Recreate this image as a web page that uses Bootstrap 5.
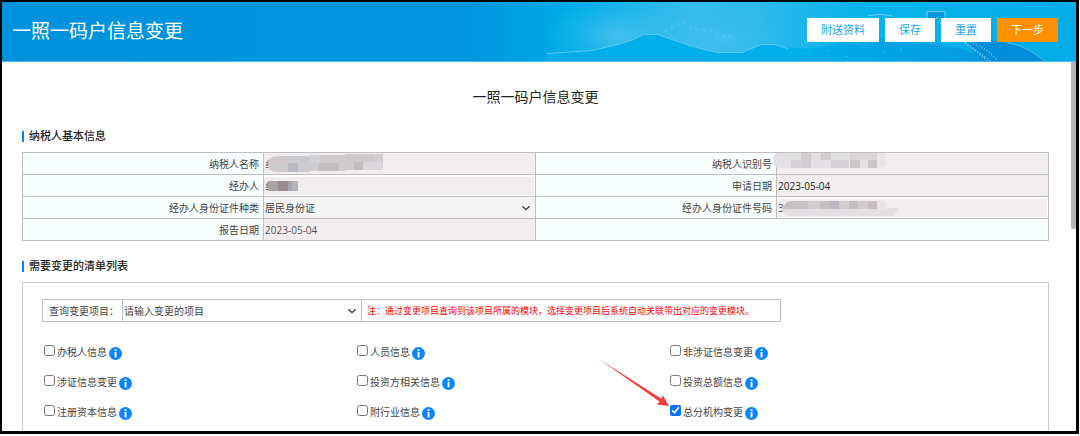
<!DOCTYPE html>
<html lang="zh-CN">
<head>
<meta charset="utf-8">
<meta name="viewport" content="width=device-width, initial-scale=1">
<title>一照一码户信息变更</title>
<link href="https://cdn.jsdelivr.net/npm/bootstrap@5.3.0/dist/css/bootstrap.min.css" rel="stylesheet">
<style>
  body { font-family: "Open Sans", "Noto Sans CJK SC", sans-serif; font-size: 10px; line-height: 14px; color: #444; background: #fff; }
  .window-frame { border: solid #000; border-width: 2px 3px 3px 2px; box-shadow: 0 1px 0 #999; height: calc(100vh - 2px); }
  .frame-gap { padding-right: 1px; }
  .top-bar { min-height: 60px; padding: 0 18px 2px 10px; background: #0093dc; border-bottom: 1px solid #4bb8ea; }
  .top-bar .scenery { inset: 0; width: 100%; height: 100%; }
  .top-bar h1 { font-size: 19px; line-height: 28px; font-weight: 400; color: #fff; }
  .actions { gap: 6px; padding-bottom: 2px; }
  .btn-top { --bs-btn-font-size: 11px; --bs-btn-padding-x: 14px; --bs-btn-padding-y: 0; --bs-btn-border-width: 0; --bs-btn-border-radius: 0;
    --bs-btn-color: #1aa7e8; --bs-btn-bg: #fff; --bs-btn-hover-bg: #eef8fd; --bs-btn-hover-color: #1aa7e8; line-height: 24px; }
  .btn-next { --bs-btn-color: #fff; --bs-btn-bg: #ff9000; --bs-btn-hover-bg: #f08600; --bs-btn-hover-color: #fff; }
  main { padding: 25px 27px 0 20px; }
  .scroll-thumb { top: 0; right: 0; width: 5px; height: 167px; background: #b5b7b7; border-radius: 0 0 2px 2px; }
  .form-title { font-size: 14px; line-height: 20px; color: #222; margin-bottom: 21px; }
  .section-title { font-size: 11px; line-height: 16px; font-weight: 500; color: #222; gap: 5px; margin-bottom: 8px; }
  .section-title::before { content: ""; width: 2px; height: 11px; background: #0a84f5; }
  .info-table { table-layout: fixed; border-collapse: collapse; margin-bottom: 17px; }
  .info-table th, .info-table td { height: 22px; padding: 0; border: 1px solid #bfbfbf; }
  .info-table th { background: #f8fefe; font-weight: 400; text-align: right; padding-right: 4px; width: 23.5%; }
  .info-table td { background: #f1edee; }
  .info-table td.blank { background: #f8fefe; }
  .info-table td.inset { background: #fff; }
  .field { height: 21px; padding: 0 0 0 1px; border: 0; border-radius: 0; font-size: 10px; line-height: 20px; color: #555; background-color: #f1edee; }
  .inset .field { height: 18px; width: calc(100% - 1px); }
  .field.strong-ink { color: #222; }
  .drop { height: 21px; padding: 0 20px 0 1px; border: 0; border-radius: 0; font-size: 10px; line-height: 20px; color: #444;
    background-color: #f4f4f4; background-position: right 5px center; background-size: 8px 8px;
    background-image: url("data:image/svg+xml,%3csvg xmlns='http://www.w3.org/2000/svg' viewBox='0 0 8 8'%3e%3cpath fill='none' stroke='%23333' stroke-width='1.2' d='M.5 2.3 4 5.7 7.5 2.3'/%3e%3c/svg%3e"); }
  .drop.plain { background-color: #fff; }
  .mosaic { pointer-events: none; }
  .m-name { left: 4px; top: 1px; } .m-agent { left: 4px; top: 4px; }
  .m-tax { left: -4px; top: 0; } .m-id { left: 5px; top: 2px; }
  .panel { border: 1px solid #ccc; min-height: 190px; padding: 16px 65px 0 19px; }
  .query { border: 1px solid #bfbfbf; height: 23px; width: 739px; max-width: 100%; }
  .query > * + * { border-left: 1px solid #bfbfbf; }
  .query label { width: 79px; padding-left: 6px; }
  .query .pick { width: 239px; }
  .query .note { color: #f00; font-size: 9px; padding-left: 5px; }
  .choices { margin: 22px 0 0 2px; row-gap: 14px; }
  .choice { height: 16px; gap: 2px; }
  .choice input { width: 11px; height: 11px; margin: 0 0 3px; accent-color: #0075f2; }
  .choice .info-dot { width: 13px; height: 13px; margin-top: 2px; }
  .pointer-arrow { right: 100%; bottom: 12px; width: 72px; height: 50px; }
</style>
</head>
<body>
<div class="frame-gap">
<div class="window-frame d-flex flex-column overflow-hidden">
  <header class="top-bar position-relative d-flex align-items-center justify-content-between flex-shrink-0">
    <svg class="scenery position-absolute" viewBox="0 0 1074 60" preserveAspectRatio="xMaxYMid slice" aria-hidden="true">
      <defs>
        <linearGradient id="sky" x1="0" x2="1"><stop offset="0" stop-color="#0093dc"/><stop offset=".43" stop-color="#0095de"/><stop offset=".54" stop-color="#00aee8"/><stop offset=".64" stop-color="#39bced"/><stop offset=".7" stop-color="#2fbaec"/><stop offset=".8" stop-color="#08b3eb"/><stop offset="1" stop-color="#05ace8"/></linearGradient>
        <radialGradient id="glow"><stop offset="0" stop-color="#62c8f1" stop-opacity=".6"/><stop offset="1" stop-color="#39bfee" stop-opacity="0"/></radialGradient>
        <linearGradient id="hill" x1="0" x2="1"><stop offset="0" stop-color="#00afe9"/><stop offset="1" stop-color="#00b0ec"/></linearGradient>
        <linearGradient id="ridge" x1="0" x2="1"><stop offset="0" stop-color="#00aeea"/><stop offset="1" stop-color="#048fdb"/></linearGradient>
      </defs>
      <rect width="1074" height="60" fill="url(#sky)"/>
      <ellipse cx="615" cy="34" rx="75" ry="38" fill="url(#glow)"/>
      <ellipse cx="720" cy="38" rx="65" ry="26" fill="url(#glow)" opacity=".5"/>
      <path d="M545 52 590 49 616 43 632 38 642 33H656L670 38 690 45 715 51H740L752 46 760 43H772L784 46 802 47 850 44 905 43 960 60H545Z" fill="url(#hill)"/>
      <path d="M545 52 590 49 616 43 632 38 642 33H656L670 38 690 45 715 51H740L752 46 760 43H772L786 47" fill="none" stroke="#70d0f4" stroke-width="1" opacity=".75"/>
      <path d="M662 30 672 25 681 21 690 27 707 29 719 35 730 35" fill="none" stroke="#8ad9f6" stroke-width="3" stroke-dasharray="4 3" opacity=".18"/>
      <path d="M790 60 822 45 850 38 880 37 920 41 962 48 990 60Z" fill="url(#ridge)" opacity=".7"/>
      <path d="M955 30 985 38 1012 43 1030 50 1043 60H980Z" fill="#008edc"/>
      <path d="M1005 41 1020 45 1034 53 1043 60" fill="none" stroke="#49bdeb" stroke-width="1"/>
      <path d="M866 14 878 13 890 14M925 16V10H943V16" fill="none" stroke="#64caef" stroke-width="1"/>
      <path d="M926 11H942V16H926Z" fill="#0795dc"/>
      <g fill="none" stroke="#7fd3f2" stroke-width="2" stroke-dasharray="1 2" opacity=".8"><path d="M935 16 942 26 960 38 985 59"/><path d="M963 41 989 60"/><path d="M966 39 985 49 995 58"/></g>
      <path d="M805 52h2M825 49h2M844 55h2M861 46h2M880 51h2M898 48h2M713 36h2M735 20h2M758 16h2M786 25h2M770 36h2" stroke="#6ecdf3" opacity=".45"/>
    </svg>
    <h1 class="position-relative mb-0">一照一码户信息变更</h1>
    <div class="actions position-relative d-flex">
      <button type="button" class="btn btn-top">附送资料</button>
      <button type="button" class="btn btn-top">保存</button>
      <button type="button" class="btn btn-top">重置</button>
      <button type="button" class="btn btn-top btn-next">下一步</button>
    </div>
  </header>

  <div class="position-relative flex-grow-1 overflow-hidden">
    <div class="scroll-thumb position-absolute"></div>
    <main>
      <div class="form-title text-center">一照一码户信息变更</div>

      <h2 class="section-title d-flex align-items-center">纳税人基本信息</h2>
      <table class="info-table w-100">
        <tbody>
        <tr>
          <th scope="row"><label for="name">纳税人名称</label></th>
          <td><div class="position-relative"><input id="name" class="field form-control" value="纟" readonly>
            <svg class="mosaic m-name position-absolute" width="115" height="18" aria-hidden="true">
              <path d="M9 2H42V1H77V0H115V16H77V17H42V18H9Q0 18 0 10T9 2Z" fill="#cecbcf"/>
              <path d="M10 2h10v8H10zM61 1h10v8H61z" fill="#d2c9c8"/><path d="M20 9h10v9H20z" fill="#bbb9c2"/><path d="M30 2h11v8H30z" fill="#c9cbd2"/><path d="M51 9h20v8H51zM86 8h9v8h-9z" fill="#c2bfc0"/><path d="M95 8h20v8H95z" fill="#dad7da"/><path d="M42 1h10v8H42zM105 0h10v8h-10z" fill="#d3d0d4"/>
            </svg></div></td>
          <th scope="row"><label for="taxno">纳税人识别号</label></th>
          <td><div class="position-relative"><input id="taxno" class="field form-control" readonly>
            <svg class="mosaic m-tax position-absolute" width="115" height="15" aria-hidden="true">
              <path d="M7 0H113V14H104V15H7Q0 14 0 7T7 0Z" fill="#e3e0e3"/>
              <path d="M28 0h10v15H28zM48 0h10v7H48z" fill="#d1cdd0"/><path d="M18 7h10v8H18zM58 7h18v8H58z" fill="#d7d4d7"/><path d="M77 7h10v8H77zM95 7h9v8h-9z" fill="#cbc5c4"/><path d="M77 0h27v7H77z" fill="#d9d5d8"/><path d="M104 0h9v14h-9z" fill="#e9e6eb"/>
            </svg></div></td>
        </tr>
        <tr>
          <th scope="row"><label for="agent">经办人</label></th>
          <td class="inset"><div class="position-relative"><input id="agent" class="field form-control" value="纟">
            <svg class="mosaic m-agent position-absolute" width="30" height="10" aria-hidden="true">
              <path d="M0 0h30v10H0z" fill="#a7a2a5"/><path d="M10 0h10v10H10z" fill="#978d91"/><path d="M20 0h4v10h-4z" fill="#a8a7ae"/><path d="M24 0h6v10h-6z" fill="#b5b6bb"/>
            </svg></div></td>
          <th scope="row"><label for="apply">申请日期</label></th>
          <td><input id="apply" class="field strong-ink form-control" value="2023-05-04" readonly></td>
        </tr>
        <tr>
          <th scope="row"><label for="idtype">经办人身份证件种类</label></th>
          <td><select id="idtype" class="drop form-select"><option>居民身份证</option></select></td>
          <th scope="row"><label for="idno">经办人身份证件号码</label></th>
          <td class="inset"><div class="position-relative"><input id="idno" class="field form-control" value="3">
            <svg class="mosaic m-id position-absolute" width="118" height="15" aria-hidden="true">
              <path d="M9 0H104V7H117L112 15H9Q0 13 0 8T9 0Z" fill="#e2dfe2"/>
              <path d="M9 0h17v8H1Q2 1 9 0z" fill="#c5c2c6"/><path d="M38 0h10v8H38zM67 0h9v8h-9z" fill="#c4c0c2"/><path d="M48 0h9v8h-9z" fill="#bdb6c0"/><path d="M86 0h9v8h-9z" fill="#c8bfbe"/><path d="M26 0h12v8H26zM57 0h10v8H57zM76 0h10v8H76z" fill="#d0cdd1"/><path d="M95 0h9v8h-9z" fill="#e9e5e9"/>
            </svg></div></td>
        </tr>
        <tr>
          <th scope="row"><label for="report">报告日期</label></th>
          <td><input id="report" class="field form-control" value="2023-05-04" readonly></td>
          <td class="blank" colspan="2"></td>
        </tr>
        </tbody>
      </table>

      <h2 class="section-title d-flex align-items-center">需要变更的清单列表</h2>
      <section class="panel">
        <div class="query d-flex align-items-stretch">
          <label for="item" class="d-flex align-items-center flex-shrink-0">查询变更项目：</label>
          <div class="pick flex-shrink-0"><select id="item" class="drop plain form-select"><option>请输入变更的项目</option></select></div>
          <div class="note d-flex align-items-center text-nowrap">注：通过变更项目查询到该项目所属的模块，选择变更项目后系统自动关联带出对应的变更模块。</div>
        </div>
        <svg class="d-none"><symbol id="info" viewBox="0 0 13 13"><circle cx="6.500" cy="6.500" r="6.500" fill="#0a84ff"/><path d="M5.600 2.300h1.900v1.600H5.600zM5.600 5h1.900v5.500H5.600z" fill="#fff"/></symbol></svg>
        <div class="choices row gx-0">
          <div class="col-4"><div class="choice d-flex align-items-center"><input type="checkbox" id="c1"><label for="c1">办税人信息</label><svg class="info-dot"><use href="#info"/></svg></div></div>
          <div class="col-4"><div class="choice d-flex align-items-center"><input type="checkbox" id="c2"><label for="c2">人员信息</label><svg class="info-dot"><use href="#info"/></svg></div></div>
          <div class="col-4"><div class="choice d-flex align-items-center"><input type="checkbox" id="c3"><label for="c3">非涉证信息变更</label><svg class="info-dot"><use href="#info"/></svg></div></div>
          <div class="col-4"><div class="choice d-flex align-items-center"><input type="checkbox" id="c4"><label for="c4">涉证信息变更</label><svg class="info-dot"><use href="#info"/></svg></div></div>
          <div class="col-4"><div class="choice d-flex align-items-center"><input type="checkbox" id="c5"><label for="c5">投资方相关信息</label><svg class="info-dot"><use href="#info"/></svg></div></div>
          <div class="col-4"><div class="choice d-flex align-items-center"><input type="checkbox" id="c6"><label for="c6">投资总额信息</label><svg class="info-dot"><use href="#info"/></svg></div></div>
          <div class="col-4"><div class="choice d-flex align-items-center"><input type="checkbox" id="c7"><label for="c7">注册资本信息</label><svg class="info-dot"><use href="#info"/></svg></div></div>
          <div class="col-4"><div class="choice d-flex align-items-center"><input type="checkbox" id="c8"><label for="c8">附行业信息</label><svg class="info-dot"><use href="#info"/></svg></div></div>
          <div class="col-4"><div class="choice position-relative d-flex align-items-center"><input type="checkbox" id="c9" checked><label for="c9">总分机构变更</label><svg class="info-dot"><use href="#info"/></svg>
            <svg class="pointer-arrow position-absolute" viewBox="0 0 72 50" aria-hidden="true"><path d="M1 1 63 40.500 65 37.500 71 48 59 46.500 61.500 43.500Z" fill="#f23c3c"/></svg></div></div>
        </div>
      </section>
    </main>
  </div>
</div>
</div>
<script src="https://cdn.jsdelivr.net/npm/bootstrap@5.3.0/dist/js/bootstrap.bundle.min.js"></script>
</body>
</html>
